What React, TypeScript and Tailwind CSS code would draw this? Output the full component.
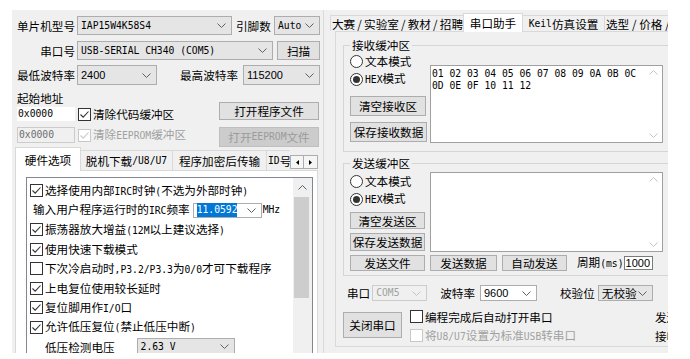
import type { ReactNode } from 'react';

// latin runs that the original draws with a narrow bitmap font
function M({ children, className = '' }: { children: ReactNode; className?: string }) {
  return (
    <span className={`font-['DejaVu_Sans_Mono',monospace] text-[9.7px] ${className}`}>{children}</span>
  );
}

function S({ children }: { children: ReactNode }) {
  return <span className="font-['Liberation_Sans',sans-serif] text-[11px]">{children}</span>;
}

function Slash() {
  return <span className="inline-block w-[10px] text-center">/</span>;
}

function Chevron({ up = false, color = '#606060' }: { up?: boolean; color?: string }) {
  return (
    <svg width="9" height="5" viewBox="0 0 9 5" className="shrink-0">
      <polyline
        points={up ? '0.5,4.5 4.5,0.5 8.5,4.5' : '0.5,0.5 4.5,4.5 8.5,0.5'}
        fill="none"
        stroke={color}
        strokeWidth="1"
      />
    </svg>
  );
}

function Combo({
  className = '',
  children,
  disabled = false,
  white = false,
}: {
  className?: string;
  children: ReactNode;
  disabled?: boolean;
  white?: boolean;
}) {
  const tone = disabled
    ? 'border-[#cccccc] bg-[#f0f0f0] text-[#a0a0a0]'
    : white
      ? 'border-[#adadad] bg-white'
      : 'border-[#adadad] bg-[#e5e5e5]';
  return (
    <div className={`flex shrink-0 items-center justify-between border pl-[3px] pr-[5px] ${tone} ${className}`}>
      <div className="flex items-center">{children}</div>
      <Chevron color={disabled ? '#c4c4c4' : '#606060'} />
    </div>
  );
}

function Btn({
  className = '',
  children,
  disabled = false,
}: {
  className?: string;
  children: ReactNode;
  disabled?: boolean;
}) {
  return (
    <div
      className={`flex shrink-0 items-center justify-center border ${
        disabled ? 'border-[#bfbfbf] bg-[#cccccc] text-[#9b9b9b]' : 'border-[#adadad] bg-[#e1e1e1]'
      } ${className}`}
    >
      {children}
    </div>
  );
}

function Check({ on = false, disabled = false, className = '' }: { on?: boolean; disabled?: boolean; className?: string }) {
  const c = disabled ? '#c8c8c8' : '#333333';
  return (
    <span
      className={`flex h-[13px] w-[13px] shrink-0 items-center justify-center border bg-white ${
        disabled ? 'border-[#c8c8c8]' : 'border-[#333333]'
      } ${className}`}
    >
      {on ? (
        <svg width="11" height="11" viewBox="0 0 11 11">
          <polyline points="1.5,5.5 4.2,8.2 9.5,2.5" fill="none" stroke={c} strokeWidth="1.1" />
        </svg>
      ) : null}
    </span>
  );
}

function Radio({ on = false }: { on?: boolean }) {
  return (
    <span className="flex h-[13px] w-[13px] shrink-0 items-center justify-center rounded-full border border-[#333333] bg-white">
      {on ? <span className="h-[7px] w-[7px] rounded-full bg-[#333333]" /> : null}
    </span>
  );
}

function TextBox({ className = '', children }: { className?: string; children?: ReactNode }) {
  return (
    <div className={`flex shrink-0 border border-[#a0a0a0] bg-white ${className}`}>
      <div className="flex-1 overflow-hidden pl-[1px] pt-[1px] leading-[11px]">{children}</div>
      <div className="flex w-[17px] flex-col items-center justify-between py-[4px]">
        <Chevron up color="#c4c4c4" />
        <Chevron color="#c4c4c4" />
      </div>
    </div>
  );
}

function Row({ children, className = '' }: { children: ReactNode; className?: string }) {
  return <div className={`flex h-[19.5px] items-center ${className}`}>{children}</div>;
}

function OptionList() {
  return (
    <div className="flex h-[200px] w-[287px] border border-[#828790] bg-white">
      <div className="flex-1 pl-[3px] pt-[3px]">
        <Row>
          <Check on />
          <span className="ml-[2px]">
            选择使用内部<M>IRC</M>时钟<M>(</M>不选为外部时钟<M>)</M>
          </span>
        </Row>
        <Row className="pl-[3px]">
          <span>
            输入用户程序运行时的<M>IRC</M>频率
          </span>
          <Combo white className="ml-[3px] h-[15px] w-[69px]">
            <M className="bg-[#0078d7] text-white">11.0592</M>
          </Combo>
          <M className="ml-[1px]">MHz</M>
        </Row>
        <Row>
          <Check on />
          <span className="ml-[2px]">
            振荡器放大增益<M>(12M</M>以上建议选择<M>)</M>
          </span>
        </Row>
        <Row>
          <Check on />
          <span className="ml-[2px]">使用快速下载模式</span>
        </Row>
        <Row>
          <Check />
          <span className="ml-[2px]">
            下次冷启动时<M>,P3.2/P3.3</M>为<M>0/0</M>才可下载程序
          </span>
        </Row>
        <Row>
          <Check on />
          <span className="ml-[2px]">上电复位使用较长延时</span>
        </Row>
        <Row>
          <Check on />
          <span className="ml-[2px]">
            复位脚用作<M>I/O</M>口
          </span>
        </Row>
        <Row>
          <Check on />
          <span className="ml-[2px]">
            允许低压复位<M>(</M>禁止低压中断<M>)</M>
          </span>
        </Row>
        <Row className="pl-[15px]">
          <span>低压检测电压</span>
          <Combo className="ml-[22px] h-[18px] w-[98px]">
            <M>2.63 V</M>
          </Combo>
        </Row>
      </div>
      <div className="flex w-[19px] flex-col bg-[#f0f0f0]">
        <div className="flex h-[18px] items-center justify-center">
          <Chevron up />
        </div>
        <div className="ml-[1px] mt-[1px] h-[101px] w-[15px] bg-[#cdcdcd]" />
      </div>
    </div>
  );
}

function LeftPane() {
  return (
    <div className="w-[311px] shrink-0 pl-[5px]">
      <div className="mt-[6px] flex h-[19px] items-center">
        <div className="w-[58px] text-right">单片机型号</div>
        <Combo className="ml-[2px] h-[19px] w-[155px]">
          <M>IAP15W4K58S4</M>
        </Combo>
        <div className="ml-[4px] w-[36px]">引脚数</div>
        <Combo className="ml-[2px] h-[19px] w-[46px]">
          <M>Auto</M>
        </Combo>
      </div>

      <div className="mt-[6px] flex h-[19px] items-center">
        <div className="w-[58px] text-right">串口号</div>
        <Combo className="ml-[2px] h-[19px] w-[196px]">
          <M>USB-SERIAL CH340 (COM5)</M>
        </Combo>
        <Btn className="ml-[4px] h-[19px] w-[43px]">扫描</Btn>
      </div>

      <div className="mt-[5px] flex h-[20px] items-center">
        <div className="w-[58px] text-right">最低波特率</div>
        <Combo className="ml-[2px] h-[20px] w-[80px]">
          <S>2400</S>
        </Combo>
        <div className="ml-[23px] w-[58px]">最高波特率</div>
        <Combo className="ml-[5px] h-[20px] w-[77px]">
          <S>115200</S>
        </Combo>
      </div>

      <div className="mt-[4px] flex items-start">
        <div className="w-[202px]">
          <div className="h-[18px] leading-[18px]">起始地址</div>
          <div className="flex h-[14px] items-center">
            <div className="flex h-[14px] w-[58px] items-center bg-white pl-[1px]">
              <M>0x0000</M>
            </div>
            <Check on className="ml-[3px]" />
            <span className="ml-[2px]">清除代码缓冲区</span>
          </div>
        </div>
        <Btn className="mt-[13px] h-[18px] w-[100px]">打开程序文件</Btn>
      </div>

      <div className="mt-[6px] flex items-start">
        <div className="flex h-[16px] w-[202px] items-center">
          <div className="flex h-[16px] w-[58px] items-center border border-[#cccccc] bg-[#f0f0f0] pl-[1px] text-[#6d6d6d]">
            <M>0x0000</M>
          </div>
          <Check on disabled className="ml-[3px]" />
          <span className="ml-[2px] text-[#a0a0a0]">
            清除<M>EEPROM</M>缓冲区
          </span>
        </div>
        <Btn disabled className="h-[20px] w-[100px]">
          打开<M>EEPROM</M>文件
        </Btn>
      </div>

      <div className="-ml-[2px] flex h-[23px] w-[303px] items-end">
        <div className="relative z-10 -mb-px flex h-[24px] w-[66px] items-center justify-center border border-b-0 border-[#d9d9d9] bg-white">
          硬件选项
        </div>
        <div className="flex h-[20px] w-[92px] items-center justify-center border-r border-t border-[#d9d9d9]">
          脱机下载<M>/U8/U7</M>
        </div>
        <div className="flex h-[20px] w-[94px] items-center justify-center border-r border-t border-[#d9d9d9]">
          程序加密后传输
        </div>
        <div className="flex h-[20px] w-[23px] items-center overflow-hidden border-t border-[#d9d9d9] pl-[1px]">
          <M>ID</M>号
        </div>
        <div className="mb-px flex h-[14px] w-[14px] items-center justify-center border border-[#adadad] bg-[#f5f5f5]">
          <svg width="3" height="5" viewBox="0 0 3 5">
            <polygon points="3,0 0,2.5 3,5" fill="#000" />
          </svg>
        </div>
        <div className="mb-px flex h-[14px] w-[14px] items-center justify-center border border-l-0 border-[#adadad] bg-[#f5f5f5]">
          <svg width="3" height="5" viewBox="0 0 3 5">
            <polygon points="0,0 3,2.5 0,5" fill="#000" />
          </svg>
        </div>
      </div>
      <div className="-ml-[2px] h-[200px] w-[303px] border border-[#d9d9d9] bg-white pl-[10px] pt-[6px]">
        <OptionList />
      </div>
    </div>
  );
}

function RightPane() {
  return (
    <div className="w-[345px] shrink-0 overflow-hidden border-l border-[#dadada]">
      <div className="ml-[6px] mt-[3px] flex h-[18px] items-end">
        <div className="flex h-[16px] w-[133px] shrink-0 items-center border-l border-t border-[#d9d9d9] pl-[1px]">
          大赛<Slash />实验室<Slash />教材<Slash />招聘
        </div>
        <div className="relative z-10 -mb-px flex h-[19px] w-[60px] shrink-0 items-center justify-center border border-b-0 border-[#d9d9d9] bg-white">
          串口助手
        </div>
        <div className="flex h-[16px] w-[82px] shrink-0 items-center justify-center border-r border-t border-[#d9d9d9]">
          <M>Keil</M>仿真设置
        </div>
        <div className="flex h-[16px] w-[80px] shrink-0 items-center border-t border-[#d9d9d9] pl-[1px]">
          选型<Slash />价格<Slash />
        </div>
      </div>

      <div className="ml-[11px] h-[316px] w-[340px] overflow-hidden border-b border-l border-t border-[#d9d9d9] bg-[#f0f0f0]">
        <fieldset className="ml-[7px] mt-[6px] w-[330px] border border-[#d5d5d5] px-[6px] pb-[8px]">
          <legend className="px-[2px] leading-[14px]">接收缓冲区</legend>
          <div className="flex items-start">
            <div className="w-[80px] shrink-0">
              <div className="flex h-[18px] items-center">
                <Radio />
                <span className="ml-[2px]">文本模式</span>
              </div>
              <div className="flex h-[18px] items-center">
                <Radio on />
                <span className="ml-[2px]">
                  <M>HEX</M>模式
                </span>
              </div>
              <Btn className="mt-[8px] h-[20px] w-[76px]">清空接收区</Btn>
              <Btn className="mt-[6px] h-[20px] w-[77px]">保存接收数据</Btn>
            </div>
            <TextBox className="mt-[13px] h-[78px] w-[233px]">
              <M className="whitespace-pre">{'01 02 03 04 05 06 07 08 09 0A 0B 0C'}</M>
              <br />
              <M className="whitespace-pre">{'0D 0E 0F 10 11 12'}</M>
            </TextBox>
          </div>
        </fieldset>

        <fieldset className="ml-[7px] mt-[4px] w-[330px] border border-[#d5d5d5] px-[6px] pb-[4px]">
          <legend className="px-[2px] leading-[14px]">发送缓冲区</legend>
          <div className="flex items-start">
            <div className="w-[80px] shrink-0">
              <div className="mt-[2px] flex h-[18px] items-center">
                <Radio />
                <span className="ml-[2px]">文本模式</span>
              </div>
              <div className="flex h-[18px] items-center">
                <Radio on />
                <span className="ml-[2px]">
                  <M>HEX</M>模式
                </span>
              </div>
              <Btn className="mt-[4px] h-[17px] w-[75px]">清空发送区</Btn>
              <Btn className="mt-[4px] h-[18px] w-[75px]">保存发送数据</Btn>
            </div>
            <TextBox className="mt-[2px] h-[80px] w-[233px]" />
          </div>
          <div className="mt-[3px] flex h-[16px] items-center">
            <Btn className="h-[16px] w-[75px]">发送文件</Btn>
            <Btn className="ml-[5px] h-[16px] w-[67px]">发送数据</Btn>
            <Btn className="ml-[5px] h-[16px] w-[65px]">自动发送</Btn>
            <span className="ml-[10px]">
              周期<M>(ms)</M>
            </span>
            <div className="flex h-[14px] w-[29px] items-center border border-[#7a7a7a] bg-white pl-[1px]">
              <S>1000</S>
            </div>
          </div>
        </fieldset>

        <div className="ml-[11px] mt-[9px] flex h-[16px] items-center">
          <span>串口</span>
          <Combo disabled className="ml-[2px] h-[16px] w-[55px]">
            <M>COM5</M>
          </Combo>
          <span className="ml-[13px]">波特率</span>
          <Combo white className="ml-[5px] h-[16px] w-[57px]">
            <S>9600</S>
          </Combo>
          <span className="ml-[23px]">校验位</span>
          <Combo className="ml-[3px] h-[16px] w-[55px]">无校验</Combo>
        </div>

        <div className="ml-[7px] mt-[6px] flex items-start">
          <Btn className="mt-[5px] h-[26px] w-[59px]">关闭串口</Btn>
          <div className="ml-[8px] w-[245px] shrink-0">
            <div className="flex h-[19px] items-center">
              <Check />
              <span className="ml-[2px]">编程完成后自动打开串口</span>
            </div>
            <div className="flex h-[19px] items-center">
              <Check disabled />
              <span className="ml-[2px] text-[#a0a0a0]">
                将<M>U8/U7</M>设置为标准<M>USB</M>转串口
              </span>
            </div>
          </div>
          <div className="shrink-0">
            <div className="flex h-[19px] items-center">发送</div>
            <div className="flex h-[19px] items-center">接收</div>
          </div>
        </div>
      </div>
    </div>
  );
}

export default function App() {
  return (
    <div className="h-[359px] w-[690px] overflow-hidden whitespace-nowrap bg-white pl-[12px] pt-[10px] font-['Noto_Sans_CJK_SC',sans-serif] text-[11.6px] leading-[14px] text-black">
      <div className="flex h-[343px] w-[656px] overflow-hidden bg-[#f0f0f0]">
        <LeftPane />
        <RightPane />
      </div>
    </div>
  );
}
